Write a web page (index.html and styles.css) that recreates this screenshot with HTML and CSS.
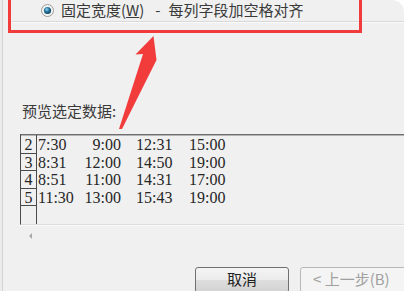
FILE: index.html
```html
<!DOCTYPE html>
<html lang="zh-CN">
<head>
    <meta charset="UTF-8">
    <title>文本导入向导</title>
    <link rel="stylesheet" href="styles.css">
</head>
<body>

<div class="window">
    <div class="option">
        <svg class="radio" width="13" height="13" viewBox="0 0 13 13">
            <defs>
                <radialGradient id="dot" cx="40%" cy="35%" r="65%">
                    <stop offset="0" stop-color="#9fd6f0"/>
                    <stop offset="0.45" stop-color="#2b7fa8"/>
                    <stop offset="1" stop-color="#0d3f5c"/>
                </radialGradient>
            </defs>
            <circle cx="6.5" cy="6.5" r="6" fill="#f4f4f4" stroke="#9a9a9a"/>
            <circle cx="6.5" cy="6.5" r="3.6" fill="url(#dot)"/>
        </svg>
        <span class="opt-name">固定宽度(<u>W</u>)</span>
        <span class="opt-dash">-</span>
        <span class="opt-desc">每列字段加空格对齐</span>
    </div>
    <div class="rule"></div>

    <div class="preview-label">预览选定数据:</div>

    <div class="preview">
        <div class="nums">
            <div class="num">2</div>
            <div class="num">3</div>
            <div class="num">4</div>
            <div class="num">5</div>
        </div>
        <div class="rows">
            <div class="row"><span>7:30</span><span class="r">9:00</span><span class="p">12:31</span><span>15:00</span></div>
            <div class="row"><span>8:31</span><span class="r">12:00</span><span class="p">14:50</span><span>19:00</span></div>
            <div class="row"><span>8:51</span><span class="r">11:00</span><span class="p">14:31</span><span>17:00</span></div>
            <div class="row"><span>11:30</span><span class="r">13:00</span><span class="p">15:43</span><span>19:00</span></div>
        </div>
    </div>
    <div class="hscroll"><span class="arrow-left"></span></div>

    <div class="buttons">
        <button class="btn">取消</button>
        <button class="btn disabled">&lt; 上一步(B)</button>
    </div>

    <!-- annotation over the screenshot -->
    <div class="mark-box"></div>
    <svg class="mark-arrow" width="404" height="291" viewBox="0 0 404 291">
        <polygon points="153.5,36 135.5,54.5 143,54 119,129 122,129 156.5,60" fill="#f23b3b"/>
    </svg>
</div>

</body>
</html>
```

FILE: styles.css
```css
html {
    background: #ffffff;
}
body {
    margin: 0;
    width: 404px;
    height: 291px;
    overflow: hidden;
    background: #ffffff;
    font-family: "Noto Sans CJK SC", "Noto Sans", sans-serif;
    color: #333;
}
.window {
    position: relative;
    margin-left: 2px;
    height: 291px;
    background: #f0f0f0;
    border-left: 1px solid #d4d4d4;
    box-shadow: -2px 0 0 #ebebeb;
    border-top-right-radius: 12px;
}
.option {
    display: flex;
    align-items: center;
    height: 18px;
    padding-top: 1px;
    padding-left: 38px;
    font-size: 15px;
    line-height: 18px;
    color: #3a3a3a;
}
.radio {
    flex: none;
}
.opt-name {
    margin-left: 7px;
}
.opt-dash {
    margin-left: 11px;
}
.opt-desc {
    margin-left: 8px;
}
.rule {
    margin-top: 2px;
    margin-left: 9px;
    border-top: 1px solid #d9d9d9;
    border-bottom: 1px solid #fbfbfb;
}
.preview-label {
    margin-top: 78px;
    padding-left: 19px;
    font-size: 15px;
    line-height: 20px;
    color: #3a3a3a;
}
.preview {
    display: flex;
    margin-top: 13px;
    margin-left: 17px;
    height: 89px;
    border-top: 1px solid #6f6f6f;
    border-left: 1px solid #4a4a4a;
    box-shadow: inset 0 1px 0 #b4b4b4;
    border-bottom: 1px solid #dcdcdc;
    font-family: "Liberation Serif", serif;
    font-size: 16px;
    color: #262626;
}
.nums {
    width: 15px;
    padding-top: 1px;
    border-right: 1px solid #4a4a4a;
}
.num {
    height: 16.5px;
    line-height: 18px;
    text-align: center;
    border-bottom: 1px solid #4a4a4a;
}
.rows {
    padding-top: 1px;
}
.row {
    display: grid;
    grid-template-columns: 46px 38px 68px auto;
    height: 17.5px;
    line-height: 18px;
}
.row span:first-child {
    padding-left: 1px;
}
.row .r {
    text-align: right;
}
.row .p {
    padding-left: 15px;
}
.hscroll {
    height: 19px;
    margin-left: 17px;
    border-top: 1px solid #fbfbfb;
    display: flex;
    align-items: center;
    padding-left: 9px;
}
.arrow-left {
    width: 0;
    height: 0;
    border-top: 3px solid transparent;
    border-bottom: 3px solid transparent;
    border-right: 3px solid #a8a8a8;
}
.buttons {
    display: flex;
    gap: 11px;
    margin-top: 22px;
    padding-left: 192px;
}
.btn {
    flex: none;
    width: 94px;
    height: 26px;
    padding: 0 0 3px;
    border: 1px solid #707070;
    border-radius: 3px;
    background: linear-gradient(#f4f4f4, #ebebeb 50%, #dddddd 51%, #d3d3d3);
    font-family: "Noto Sans CJK SC", sans-serif;
    font-size: 15px;
    color: #222;
}
.btn.disabled {
    width: 112px;
    text-align: left;
    padding-left: 12px;
    border-color: #b5b9bc;
    background: #f4f4f4;
    color: #a0a0a0;
}
.mark-box {
    position: absolute;
    left: 5px;
    top: -4px;
    width: 348px;
    height: 31px;
    border: 3px solid #f23b3b;
}
.mark-arrow {
    position: absolute;
    left: -3px;
    top: 0;
}
```
